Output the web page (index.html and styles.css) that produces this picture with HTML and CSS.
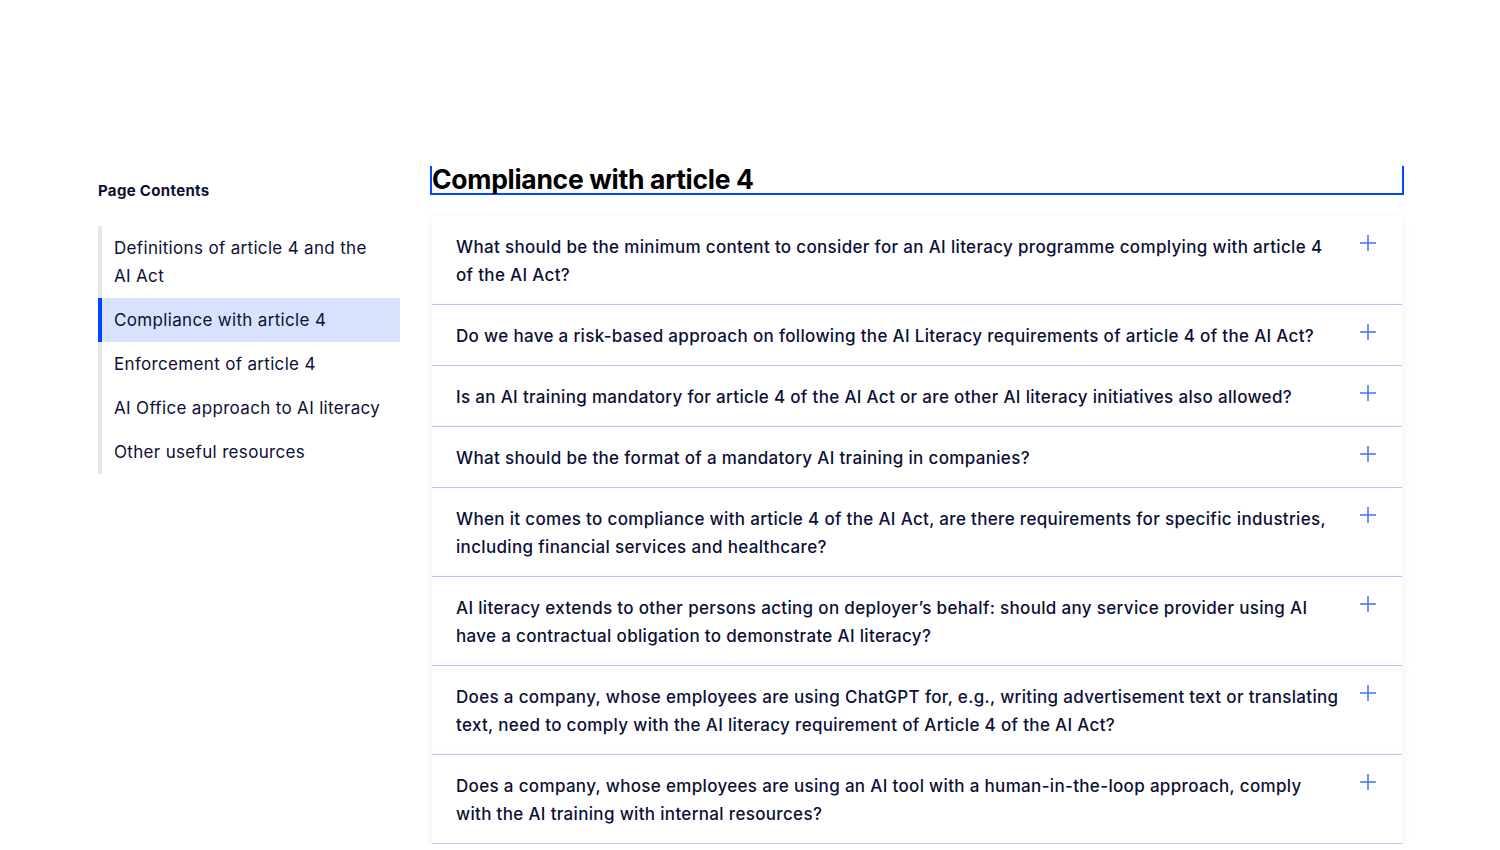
FILE: index.html
```html
<!doctype html>
<html lang="en">
<head>
  <meta charset="UTF-8">
  <meta name="viewport" content="width=device-width, initial-scale=1.0">
  <title>AI Literacy - Questions &amp; Answers</title>
  <link rel="stylesheet" href="styles.css">
</head>
<body>
  <div class="page">
    <aside class="sidebar">
      <div class="sidebar-title">Page Contents</div>
      <ul class="toc">
        <li class="toc-item">Definitions of article 4 and the AI Act</li>
        <li class="toc-item active">Compliance with article 4</li>
        <li class="toc-item">Enforcement of article 4</li>
        <li class="toc-item">AI Office approach to AI literacy</li>
        <li class="toc-item">Other useful resources</li>
      </ul>
    </aside>

    <main class="content">
      <h2 class="section-title">Compliance with article 4</h2>

      <div class="faq">
        <div class="faq-item">
          <div class="faq-question">What should be the minimum content to consider for an AI literacy programme complying with article 4 of the AI Act?</div>
          <span class="faq-toggle"><svg width="16" height="16" viewBox="0 0 16 16"><path d="M8 0v16M0 8h16"/></svg></span>
        </div>
        <div class="faq-item">
          <div class="faq-question">Do we have a risk-based approach on following the AI Literacy requirements of article 4 of the AI Act?</div>
          <span class="faq-toggle"><svg width="16" height="16" viewBox="0 0 16 16"><path d="M8 0v16M0 8h16"/></svg></span>
        </div>
        <div class="faq-item">
          <div class="faq-question">Is an AI training mandatory for article 4 of the AI Act or are other AI literacy initiatives also allowed?</div>
          <span class="faq-toggle"><svg width="16" height="16" viewBox="0 0 16 16"><path d="M8 0v16M0 8h16"/></svg></span>
        </div>
        <div class="faq-item">
          <div class="faq-question">What should be the format of a mandatory AI training in companies?</div>
          <span class="faq-toggle"><svg width="16" height="16" viewBox="0 0 16 16"><path d="M8 0v16M0 8h16"/></svg></span>
        </div>
        <div class="faq-item">
          <div class="faq-question">When it comes to compliance with article 4 of the AI Act, are there requirements for specific industries, including financial services and healthcare?</div>
          <span class="faq-toggle"><svg width="16" height="16" viewBox="0 0 16 16"><path d="M8 0v16M0 8h16"/></svg></span>
        </div>
        <div class="faq-item">
          <div class="faq-question">AI literacy extends to other persons acting on deployer’s behalf: should any service provider using AI have a contractual obligation to demonstrate AI literacy?</div>
          <span class="faq-toggle"><svg width="16" height="16" viewBox="0 0 16 16"><path d="M8 0v16M0 8h16"/></svg></span>
        </div>
        <div class="faq-item">
          <div class="faq-question">Does a company, whose employees are using ChatGPT for, e.g., writing advertisement text or translating text, need to comply with the AI literacy requirement of Article 4 of the AI Act?</div>
          <span class="faq-toggle"><svg width="16" height="16" viewBox="0 0 16 16"><path d="M8 0v16M0 8h16"/></svg></span>
        </div>
        <div class="faq-item">
          <div class="faq-question">Does a company, whose employees are using an AI tool with a human-in-the-loop approach, comply with the AI training with internal resources?</div>
          <span class="faq-toggle"><svg width="16" height="16" viewBox="0 0 16 16"><path d="M8 0v16M0 8h16"/></svg></span>
        </div>
      </div>
    </main>
  </div>
</body>
</html>
```

FILE: styles.css
```css
* {
    box-sizing: border-box;
}

body {
    margin: 0;
    font-family: Inter, "Noto Sans", sans-serif;
    color: #0c0f36;
    background: #fff;
    letter-spacing: 0.33px;
}

.page {
    display: flex;
    gap: 32px;
    width: 1304px;
    margin: 0 auto;
    padding-top: 166px;
}

.sidebar {
    width: 302px;
    flex-shrink: 0;
}

.sidebar-title {
    font-size: 15px;
    font-weight: 700;
    line-height: 24px;
    margin-top: 13px;
    margin-bottom: 23px;
}

.toc {
    list-style: none;
    margin: 0;
    padding: 0;
    border-left: 4px solid #e8e8ea;
}

.toc-item {
    font-size: 17px;
    line-height: 28px;
    padding: 8px 12px;
    margin-left: -4px;
    border-left: 4px solid transparent;
    cursor: pointer;
}

.toc-item.active {
    background: #d9e2fc;
    border-left-color: #0047ff;
}

.content {
    width: 970px;
}

.section-title {
    margin: 0 -2px 21px;
    padding: 0;
    font-size: 26.5px;
    font-weight: 700;
    line-height: 27px;
    color: #000;
    letter-spacing: -0.3px;
    border: 2px solid #0047ff;
    border-top: 0;
}

.faq-item {
    display: flex;
    align-items: flex-start;
    gap: 16px;
    padding: 17px 24px 15px 24px;
    background: #fff;
    border-bottom: 1px solid #b8cbf9;
    box-shadow: 0 2px 10px rgba(20, 20, 60, 0.07);
}

.faq-question {
    flex: 1;
    font-size: 17px;
    font-weight: 500;
    line-height: 28px;
    color: #0c0f36;
}

.faq-toggle {
    display: flex;
    width: 20px;
    justify-content: center;
    padding-top: 2px;
}

.faq-toggle svg {
    stroke: #4371f5;
    stroke-width: 1.5;
    fill: none;
}
```
